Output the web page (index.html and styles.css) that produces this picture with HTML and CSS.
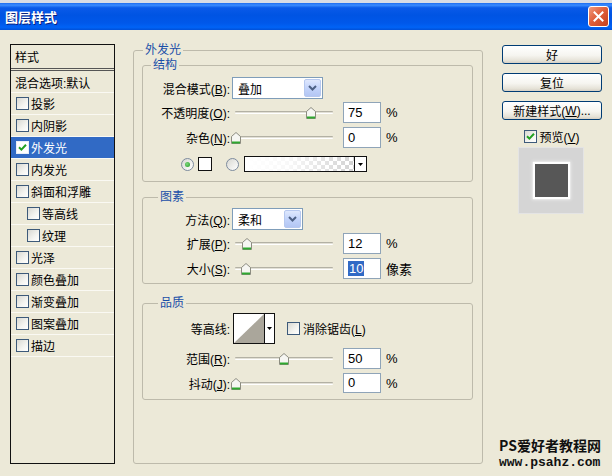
FILE: index.html
```html
<!DOCTYPE html>
<html lang="zh-CN">
<head>
<meta charset="utf-8">
<title>图层样式</title>
<link rel="stylesheet" href="styles.css">
</head>
<body>
<div class="window">
  <div class="topstrip"></div>
  <div class="titlebar">
    <span class="title">图层样式</span>
    <span class="close"><svg width="11" height="11" viewBox="0 0 11 11"><path d="M1.5 1.5 L9.5 9.5 M9.5 1.5 L1.5 9.5" stroke="#fff" stroke-width="2" stroke-linecap="square"/></svg></span>
  </div>

  <div class="main">
    <div class="stylelist">
      <div class="li head">样式</div>
      <div class="li blend">混合选项:默认</div>
      <div class="li"><span class="cb"></span>投影</div>
      <div class="li"><span class="cb"></span>内阴影</div>
      <div class="li sel-row"><span class="cb on"><svg width="9" height="9" viewBox="0 0 9 9"><path d="M1 4.2 L3.4 6.6 L8 1.8" stroke="#21a121" stroke-width="2" fill="none"/></svg></span>外发光</div>
      <div class="li"><span class="cb"></span>内发光</div>
      <div class="li"><span class="cb"></span>斜面和浮雕</div>
      <div class="li sub"><span class="cb"></span>等高线</div>
      <div class="li sub"><span class="cb"></span>纹理</div>
      <div class="li"><span class="cb"></span>光泽</div>
      <div class="li"><span class="cb"></span>颜色叠加</div>
      <div class="li"><span class="cb"></span>渐变叠加</div>
      <div class="li"><span class="cb"></span>图案叠加</div>
      <div class="li"><span class="cb"></span>描边</div>
    </div>

    <fieldset class="grp outer">
      <legend>外发光</legend>

      <fieldset class="grp inner s1">
        <legend>结构</legend>
        <div class="row r-sel1">
          <span class="lbl">混合模式(<u>B</u>):</span>
          <span class="combo w91"><span class="combo-text">叠加</span><span class="combo-btn"><svg width="9" height="6" viewBox="0 0 9 6"><path d="M1 1 L4.5 4.5 L8 1" stroke="#4d6185" stroke-width="2" fill="none"/></svg></span></span>
        </div>
        <div class="row r-a">
          <span class="lbl">不透明度(<u>O</u>):</span>
          <span class="slider"><span class="track"></span><span class="thumb" style="left:74px"><svg width="10" height="12" viewBox="0 0 10 12"><path d="M0.5 4.5 L5 0.5 L9.5 4.5 V11.5 H0.5 Z" fill="#f6f6f2" stroke="#8c8c80"/><path d="M1 10.5 H9" stroke="#2fa82f" stroke-width="2"/></svg></span></span>
          <span class="num">75</span><span class="unit">%</span>
        </div>
        <div class="row r-b">
          <span class="lbl">杂色(<u>N</u>):</span>
          <span class="slider"><span class="track"></span><span class="thumb" style="left:-1px"><svg width="10" height="12" viewBox="0 0 10 12"><path d="M0.5 4.5 L5 0.5 L9.5 4.5 V11.5 H0.5 Z" fill="#f6f6f2" stroke="#8c8c80"/><path d="M1 10.5 H9" stroke="#2fa82f" stroke-width="2"/></svg></span></span>
          <span class="num">0</span><span class="unit">%</span>
        </div>
        <div class="row r-color">
          <span class="rd on"><span class="dot"></span></span>
          <span class="swatch"></span>
          <span class="rd second"></span>
          <span class="grad"><span class="grad-fill"></span><span class="grad-arrow"><svg width="5" height="3" viewBox="0 0 5 3"><path d="M0 0 H5 L2.5 3 Z" fill="#000"/></svg></span></span>
        </div>
      </fieldset>

      <fieldset class="grp inner s2">
        <legend>图素</legend>
        <div class="row r-sel2">
          <span class="lbl">方法(<u>Q</u>):</span>
          <span class="combo w71"><span class="combo-text">柔和</span><span class="combo-btn"><svg width="9" height="6" viewBox="0 0 9 6"><path d="M1 1 L4.5 4.5 L8 1" stroke="#4d6185" stroke-width="2" fill="none"/></svg></span></span>
        </div>
        <div class="row r-a">
          <span class="lbl">扩展(<u>P</u>):</span>
          <span class="slider"><span class="track"></span><span class="thumb" style="left:10px"><svg width="10" height="12" viewBox="0 0 10 12"><path d="M0.5 4.5 L5 0.5 L9.5 4.5 V11.5 H0.5 Z" fill="#f6f6f2" stroke="#8c8c80"/><path d="M1 10.5 H9" stroke="#2fa82f" stroke-width="2"/></svg></span></span>
          <span class="num">12</span><span class="unit">%</span>
        </div>
        <div class="row r-b">
          <span class="lbl">大小(<u>S</u>):</span>
          <span class="slider"><span class="track"></span><span class="thumb" style="left:9px"><svg width="10" height="12" viewBox="0 0 10 12"><path d="M0.5 4.5 L5 0.5 L9.5 4.5 V11.5 H0.5 Z" fill="#f6f6f2" stroke="#8c8c80"/><path d="M1 10.5 H9" stroke="#2fa82f" stroke-width="2"/></svg></span></span>
          <span class="num"><span class="hl">10</span></span><span class="unit">像素</span>
        </div>
      </fieldset>

      <fieldset class="grp inner s3">
        <legend>品质</legend>
        <div class="row r-contour">
          <span class="lbl">等高线:</span>
          <span class="contour"><span class="contour-img"><svg width="30" height="29" viewBox="0 0 30 29"><path d="M0 29 L30 0 L30 29 Z" fill="#aaa69b"/></svg></span><span class="contour-arrow"><svg width="5" height="3" viewBox="0 0 5 3"><path d="M0 0 H5 L2.5 3 Z" fill="#000"/></svg></span></span>
          <span class="cb aa"></span><span class="aa-text">消除锯齿(<u>L</u>)</span>
        </div>
        <div class="row r-b">
          <span class="lbl">范围(<u>R</u>):</span>
          <span class="slider"><span class="track"></span><span class="thumb" style="left:47px"><svg width="10" height="12" viewBox="0 0 10 12"><path d="M0.5 4.5 L5 0.5 L9.5 4.5 V11.5 H0.5 Z" fill="#f6f6f2" stroke="#8c8c80"/><path d="M1 10.5 H9" stroke="#2fa82f" stroke-width="2"/></svg></span></span>
          <span class="num">50</span><span class="unit">%</span>
        </div>
        <div class="row r-c">
          <span class="lbl">抖动(<u>J</u>):</span>
          <span class="slider"><span class="track"></span><span class="thumb" style="left:-1px"><svg width="10" height="12" viewBox="0 0 10 12"><path d="M0.5 4.5 L5 0.5 L9.5 4.5 V11.5 H0.5 Z" fill="#f6f6f2" stroke="#8c8c80"/><path d="M1 10.5 H9" stroke="#2fa82f" stroke-width="2"/></svg></span></span>
          <span class="num">0</span><span class="unit">%</span>
        </div>
      </fieldset>
    </fieldset>

    <div class="side">
      <div class="btn">好</div>
      <div class="btn">复位</div>
      <div class="btn">新建样式(<u>W</u>)...</div>
      <div class="preview-row">
        <span class="cb on"><svg width="9" height="9" viewBox="0 0 9 9"><path d="M1 4.2 L3.4 6.6 L8 1.8" stroke="#21a121" stroke-width="2" fill="none"/></svg></span>
        <span class="pv-text">预览(<u>V</u>)</span>
      </div>
      <div class="preview"><div class="preview-sq"></div></div>
    </div>
  </div>

  <div class="watermark">
    <div class="wm1">PS爱好者教程网</div>
    <div class="wm2">www.psahz.com</div>
  </div>
</div>
</body>
</html>
```

FILE: styles.css
```css
html, body {
  margin: 0;
  padding: 0;
}

body {
  background: #ece9d8;
  font-family: "Liberation Sans", "Noto Sans CJK SC", sans-serif;
  font-size: 12px;
  color: #000;
}

.window {
  position: relative;
  width: 612px;
  height: 476px;
  overflow: hidden;
  background: #ece9d8;
}

u {
  text-decoration: underline;
  text-underline-offset: 1px;
}

/* ---------- title bar ---------- */
.topstrip {
  height: 3px;
  background: #d9dde5;
}

.titlebar {
  height: 27px;
  display: flex;
  align-items: center;
  justify-content: space-between;
  padding: 0 3px 0 5px;
  background: linear-gradient(to bottom, #1c6cf0 0%, #3b8cff 8%, #0a5ae8 18%, #0054e3 45%, #0058ea 75%, #0063f6 90%, #0050d8 100%);
}

.title {
  color: #fff;
  font-family: "Noto Sans CJK SC", sans-serif;
  font-weight: bold;
  font-size: 13px;
  text-shadow: 1px 1px 0 #0a2280;
}

.close {
  width: 21px;
  height: 21px;
  box-sizing: border-box;
  border: 1px solid #fff;
  border-radius: 3px;
  background: linear-gradient(135deg, #f09a7c 0%, #e0603c 45%, #c4401e 100%);
  display: flex;
  align-items: center;
  justify-content: center;
}

/* ---------- main area ---------- */
.main {
  display: flex;
  align-items: flex-start;
  padding: 13px 0 0 10px;
}

/* style list */
.stylelist {
  width: 105px;
  height: 420px;
  margin-top: 1px;
  box-sizing: border-box;
  border: 1px solid #111;
  flex: none;
}

.li {
  height: 22px;
  box-sizing: border-box;
  border-bottom: 1px solid #faf9f3;
  display: flex;
  align-items: center;
  padding-left: 5px;
  white-space: nowrap;
}

.li .cb {
  margin-right: 2px;
}

.li.head {
  height: 26px;
  padding-left: 4px;
  border-bottom: 3px double #555;
}

.li.blend {
  padding-left: 4px;
  padding-top: 2px;
}

.li.sub {
  padding-left: 16px;
}

.li.sel-row {
  background: #316ac5;
  color: #fff;
}

.li.sel-row .cb {
  border-color: #e8eef8;
  background: #fff;
}

/* checkbox & radio */
.cb {
  width: 13px;
  height: 13px;
  box-sizing: border-box;
  border: 1px solid #3d5a7a;
  background: linear-gradient(135deg, #d8d8d2 0%, #f4f4f0 60%, #fff 100%);
  flex: none;
  display: inline-flex;
  align-items: center;
  justify-content: center;
}

.rd {
  width: 13px;
  height: 13px;
  box-sizing: border-box;
  border: 1px solid #7d8b9e;
  border-radius: 50%;
  background: linear-gradient(135deg, #d8d8d2 0%, #fff 100%);
  flex: none;
  display: inline-flex;
  align-items: center;
  justify-content: center;
}

.rd .dot {
  width: 5px;
  height: 5px;
  border-radius: 50%;
  background: radial-gradient(circle at 40% 40%, #7fd77f, #1f9a1f);
}

/* group boxes */
.grp {
  margin: 0;
  min-width: 0;
  border: 1px solid #bdbaab;
  border-radius: 3px;
  box-sizing: border-box;
}

.grp legend {
  font-family: "Liberation Sans", "Noto Sans CJK SC", sans-serif;
  font-size: 12px;
  line-height: 14px;
  color: #1a4fa8;
  padding: 0 2px;
}

.outer {
  width: 350px;
  margin-left: 18px;
  padding: 1px 8px 63px 8px;
  flex: none;
}

.outer > legend {
  margin-left: 1px;
}

.inner {
  width: 331px;
  padding: 0;
}

.s1 {
  padding-bottom: 7px;
}

.s1 > legend {
  margin-left: 8px;
}

.s2 {
  margin-top: 8px;
  padding-bottom: 4px;
}

.s2 > legend,
.s3 > legend {
  margin-left: 15px;
}

.s3 {
  margin-top: 12px;
  padding-bottom: 6px;
}

/* rows */
.row {
  display: flex;
  align-items: center;
  white-space: nowrap;
}

.lbl {
  width: 87px;
  flex: none;
  text-align: right;
}

.r-sel1 {
  margin-top: 5px;
  height: 22px;
}

.r-sel2 {
  margin-top: 4px;
  height: 22px;
}

.r-a {
  margin-top: 3px;
  height: 21px;
}

.r-b {
  margin-top: 4px;
  height: 21px;
}

.r-c {
  margin-top: 4px;
  height: 20px;
}

.r-color {
  margin-top: 6px;
  height: 20px;
  padding-left: 38px;
}

.r-contour {
  margin-top: 3px;
  height: 31px;
}

/* combo box */
.combo {
  margin-left: 2px;
  height: 22px;
  box-sizing: border-box;
  border: 1px solid #7f9db9;
  background: #fff;
  display: flex;
  align-items: center;
  justify-content: space-between;
  flex: none;
}

.w91 {
  width: 91px;
}

.w71 {
  width: 71px;
}

.combo-text {
  padding-left: 5px;
}

.combo-btn {
  width: 17px;
  height: 18px;
  margin-right: 1px;
  box-sizing: border-box;
  border: 1px solid #b6c8ef;
  border-radius: 2px;
  background: linear-gradient(to bottom, #dfe8fd 0%, #c3d4fb 50%, #b3c6f3 100%);
  display: flex;
  align-items: center;
  justify-content: center;
}

/* slider */
.slider {
  position: relative;
  width: 104px;
  height: 21px;
  margin-left: 2px;
  flex: none;
}

.track {
  position: absolute;
  left: 3px;
  right: 3px;
  top: 9px;
  height: 3px;
  box-sizing: border-box;
  border-top: 1px solid #b3b1a4;
  border-bottom: 1px solid #fff;
  background: #e2e0d6;
  border-radius: 1px;
}

.thumb {
  position: absolute;
  top: 5px;
  width: 10px;
  height: 12px;
  display: block;
}

.thumb svg {
  display: block;
}

/* number box */
.num {
  width: 38px;
  height: 21px;
  margin-left: 7px;
  box-sizing: border-box;
  border: 1px solid #8fa4b8;
  background: #fff;
  font-family: "Liberation Sans", sans-serif;
  font-size: 13px;
  line-height: 19px;
  padding-left: 4px;
  flex: none;
}

.r-c .num {
  height: 20px;
  line-height: 18px;
}

.hl {
  background: #316ac5;
  color: #fff;
  padding: 0 1px;
}

.unit {
  margin-left: 5px;
  font-size: 13px;
}

/* color row */
.swatch {
  width: 14px;
  height: 14px;
  margin-left: 4px;
  box-sizing: border-box;
  border: 1px solid #111;
  background: #fff;
  flex: none;
}

.rd.second {
  margin-left: 14px;
}

.grad {
  width: 123px;
  height: 16px;
  margin-left: 5px;
  box-sizing: border-box;
  border: 1px solid #111;
  display: flex;
  flex: none;
}

.grad-fill {
  flex: 1;
  background:
    linear-gradient(to right, #fff 0%, rgba(255, 255, 255, 0.85) 40%, rgba(255, 255, 255, 0) 100%),
    repeating-conic-gradient(#d2d2d2 0 25%, #fff 0 50%) 0 0 / 8px 8px;
}

.grad-arrow {
  width: 11px;
  border-left: 1px solid #111;
  background: #fff;
  display: flex;
  align-items: center;
  justify-content: center;
}

/* contour */
.contour {
  width: 42px;
  height: 31px;
  margin-left: 3px;
  box-sizing: border-box;
  border: 1px solid #111;
  background: #fff;
  display: flex;
  flex: none;
}

.contour-img {
  width: 30px;
  height: 29px;
}

.contour-img svg {
  display: block;
}

.contour-arrow {
  flex: 1;
  border-left: 1px solid #111;
  display: flex;
  align-items: center;
  justify-content: center;
}

.cb.aa {
  margin-left: 12px;
}

.aa-text {
  margin-left: 3px;
}

/* right column */
.side {
  width: 100px;
  margin-left: 19px;
  margin-top: 2px;
  display: flex;
  flex-direction: column;
  flex: none;
}

.btn {
  height: 19px;
  box-sizing: border-box;
  border: 1px solid #003c74;
  border-radius: 3px;
  background: linear-gradient(to bottom, #ffffff 0%, #f6f5f0 55%, #e6e3d8 85%, #d6d0c4 100%);
  display: flex;
  align-items: center;
  justify-content: center;
  margin-bottom: 9px;
  white-space: nowrap;
}

.preview-row {
  height: 14px;
  display: flex;
  align-items: center;
  justify-content: center;
}

.pv-text {
  margin-left: 2px;
}

.preview {
  width: 66px;
  height: 67px;
  margin-top: 4px;
  margin-left: 16px;
  box-sizing: border-box;
  border: 1px solid #e4e4e4;
  background: #d5d5d5;
  display: flex;
  align-items: center;
  justify-content: center;
}

.preview-sq {
  width: 33px;
  height: 33px;
  background: #575757;
  box-shadow: 0 0 1px 2px #fff, 0 0 3px 3px rgba(255, 255, 255, 0.5);
}

/* watermark overlay */
.watermark {
  position: absolute;
  left: 499px;
  top: 436px;
  font-weight: bold;
  color: #111;
}

.wm1 {
  font-family: "Noto Sans CJK SC", sans-serif;
  font-size: 14px;
  line-height: 18px;
}

.wm2 {
  font-family: "Liberation Mono", monospace;
  font-size: 13px;
  line-height: 17px;
}
```
